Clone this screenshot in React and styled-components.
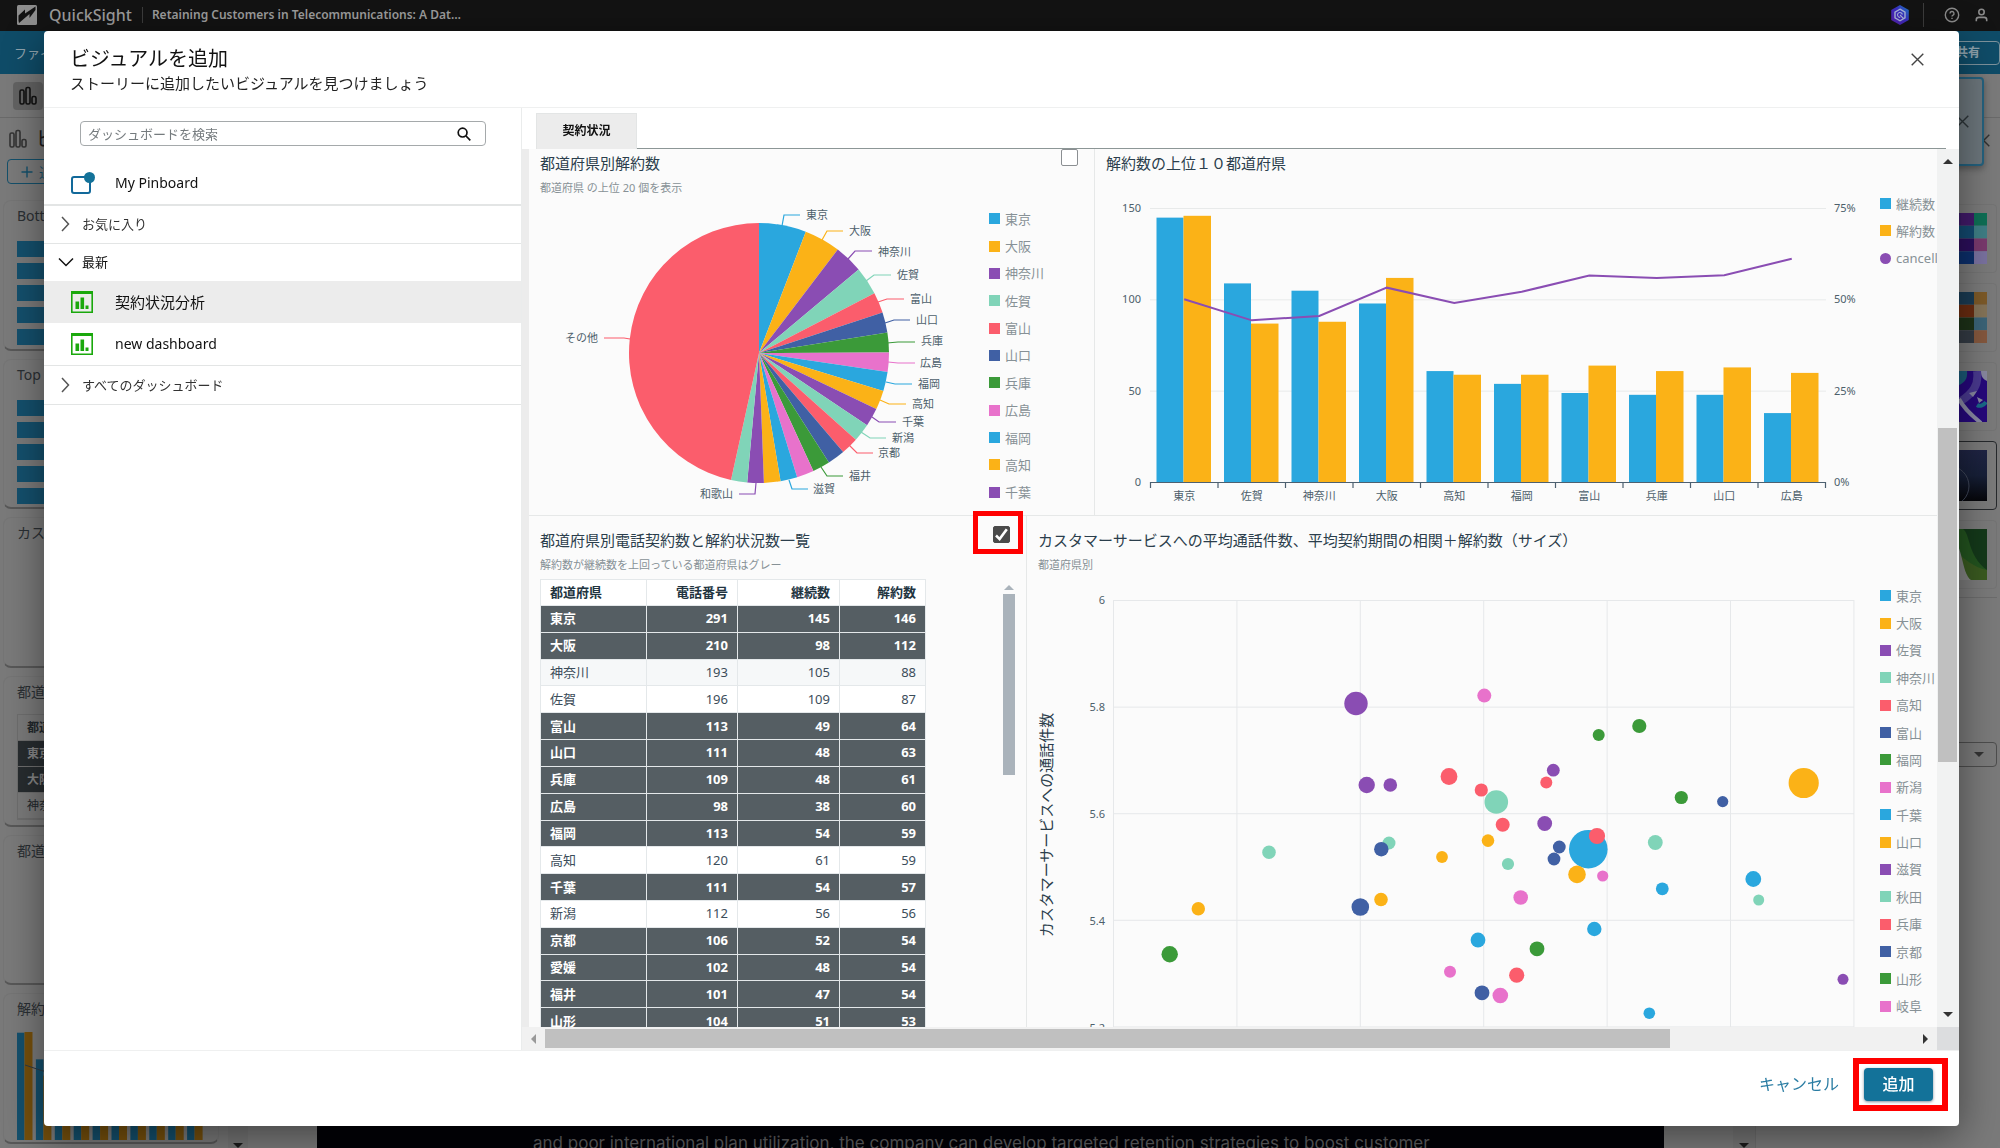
import React from "react";
import styled, { createGlobalStyle, css } from "styled-components";

const C = {
  blue: "#2aa7de",
  orange: "#fbb217",
  purple: "#8a4db3",
  mint: "#80d4b8",
  red: "#fb5d6c",
  navy: "#4060a4",
  green: "#3b9a39",
  pink: "#e872cb",
};
const CYCLE = [C.blue, C.orange, C.purple, C.mint, C.red, C.navy, C.green, C.pink];

const GlobalStyle = createGlobalStyle`
  *, *::before, *::after { box-sizing: border-box; }
  body {
    margin: 0;
    overflow: hidden;
    font-family: "Noto Sans", "Noto Sans CJK JP", sans-serif;
    font-size: 13px;
    color: #16191f;
  }
  button, input { font-family: inherit; }
  h1, h2, p { margin: 0; font-weight: 400; }
  svg { display: block; flex: none; }
`;

/* ---------- application behind the dialog ---------- */

const Page = styled.div`
  display: flex;
  flex-direction: column;
  height: 100vh;
  background: #7a7a7a;
`;

const TopBar = styled.header`
  display: flex;
  align-items: center;
  height: 31px;
  padding: 0 12px 2px 17px;
  background: #131313;
  color: #9c9c9c;
  flex: none;
`;

const Brand = styled.span`
  margin-left: 12px;
  font-size: 16px;
  line-height: 20px;
  font-weight: 500;
`;

const BarDivider = styled.span`
  width: 1px;
  height: ${(p) => (p.$tall ? 24 : 16)}px;
  margin: 0 ${(p) => (p.$tall ? 20 : 9)}px 0 ${(p) => (p.$tall ? 13 : 10)}px;
  background: #3c3c3c;
`;

const StoryName = styled.span`
  font-size: 12px;
  line-height: 18px;
  font-weight: 600;
`;

const TopIcons = styled.div`
  display: flex;
  align-items: center;
  margin-left: auto;
  svg:last-child { margin-left: 15px; }
`;

const MenuBar = styled.div`
  display: flex;
  align-items: center;
  justify-content: space-between;
  height: 43px;
  padding-left: 14px;
  background: #0f4c68;
  color: #8fa3ad;
  flex: none;
`;

const ShareButton = styled.button`
  height: 24px;
  width: 64px;
  padding: 0 0 2px;
  border: 1px solid #7d929c;
  border-radius: 4px;
  background: transparent;
  color: #8fa3ad;
  font-size: 12px;
  font-weight: 700;
`;

const ToolBar = styled.div`
  height: 44px;
  padding: 8px 13px;
  border-bottom: 1px solid #6a6a6a;
  flex: none;
`;

const ToolButton = styled.button`
  display: grid;
  place-items: center;
  width: 30px;
  height: 28px;
  padding: 0;
  border: 0;
  border-radius: 4px;
  background: #636363;
`;

const Workspace = styled.div`
  display: flex;
  flex: 1;
  min-height: 0;
`;

const LeftPane = styled.aside`
  display: flex;
  width: 248px;
  margin-right: 69px;
`;

const LeftMain = styled.div`
  display: flex;
  flex-direction: column;
  flex: 1;
  padding: 7px 9px 4px 3px;
`;

const PaneHeading = styled.div`
  display: flex;
  align-items: center;
  gap: 8px;
  height: 28px;
  padding-left: 5px;
  font-size: 20px;
  line-height: 28px;
  color: #1c1c1c;
`;

const OutlineButton = styled.button`
  display: flex;
  align-items: center;
  gap: 6px;
  align-self: flex-start;
  height: 25px;
  width: 90px;
  margin: 6px 0 16px 4px;
  padding: 0 13px;
  border: 1px solid #14506b;
  border-radius: 4px;
  background: transparent;
  color: #14506b;
  font-size: 13px;
  white-space: nowrap;
`;

const CardList = styled.div`
  display: flex;
  flex-direction: column;
  flex: 1;
  gap: 8px;
`;

const Card = styled.div`
  flex: 1;
  min-height: 0;
  overflow: hidden;
  padding: 4px 13px;
  border-radius: 8px;
  border: 1px solid #757575;
  border-bottom: 2px solid #585858;
  color: #2a2f33;
  & > svg { margin-top: 12px; }
`;

const CardTitle = styled.p`
  font-size: 14px;
  line-height: 22px;
  white-space: nowrap;
`;

const MiniBars = styled.div`
  display: grid;
  gap: 6px;
  padding-top: 14px;
  & > i { height: 16px; background: #14506d; }
`;

const MiniTable = styled.div`
  margin-top: 11px;
  border: 1px solid #6e6e6e;
  font-size: 12px;
`;

const MiniRow = styled.div`
  height: 26px;
  padding-left: 9px;
  line-height: 25px;
  font-weight: ${(p) => (p.$plain ? 400 : 700)};
  background: ${(p) => (p.$dark ? "#272c2f" : "transparent")};
  color: ${(p) => (p.$dark ? "#858585" : "#22282c")};
  border-bottom: 1px solid #6e6e6e;
`;

const GutterTrack = styled.div`
  display: flex;
  align-items: flex-end;
  justify-content: center;
  width: 22px;
  background: #757575;
`;

const Canvas = styled.main`
  display: flex;
  flex: 1;
  align-items: flex-end;
  overflow: hidden;
  padding-left: 216px;
  background: #020207;
  color: #5c5c5e;
  font-family: Inter, sans-serif;
  font-size: 17px;
  line-height: 24px;
  white-space: nowrap;
`;

const CanvasText = styled.p`
  margin-bottom: -7px;
`;

const CanvasGutter = styled.div`
  width: 69px;
`;

const RightPane = styled.aside`
  display: flex;
  flex-direction: column;
  width: 245px;
  padding: 10px 3px 0 12px;
  border-left: 1px solid #6e6e6e;
`;

const RightTop = styled.div`
  display: flex;
  justify-content: flex-end;
  padding: 6px 7px 0 0;
  height: 76px;
`;

const ThemeList = styled.div`
  display: grid;
  gap: 10px;
  padding-bottom: 8px;
  border-bottom: 1px solid #6c6c6c;
`;

const ThemeCard = styled.div`
  display: flex;
  justify-content: flex-end;
  height: 69px;
  padding: 8px 9px;
  border-radius: 4px;
  border: 1px solid ${(p) => (p.$selected ? "#26292c" : "#747474")};
`;

const SelectWrap = styled.label`
  position: relative;
  display: block;
  margin-top: 144px;
  svg { position: absolute; right: 13px; top: 10px; }
`;

const PaneSelect = styled.select`
  appearance: none;
  display: block;
  width: 100%;
  height: 25px;
  border: 1px solid #4d4d4d;
  border-radius: 4px;
  background: transparent;
`;

const Notice = styled.div`
  position: absolute;
  top: 77px;
  right: 16px;
  width: 400px;
  height: 89px;
  display: flex;
  align-items: center;
  justify-content: flex-end;
  padding-right: 13px;
  border: 2px solid #24617e;
  border-radius: 4px;
  background: #6c767c;
  box-shadow: 0 3px 6px rgba(0, 0, 0, 0.3);
`;

/* ---------- dialog ---------- */

const DialogShadow = styled.div`
  position: fixed;
  inset: 31px 41px 22px 44px;
  border-radius: 4px;
  box-shadow: 0 10px 40px rgba(0, 0, 0, 0.45);
`;

const Dialog = styled.section`
  position: fixed;
  inset: 31px 41px 22px 44px;
  display: flex;
  flex-direction: column;
  overflow: hidden;
  border-radius: 4px;
  background: #fff;
`;

const DialogHeader = styled.header`
  display: flex;
  justify-content: space-between;
  align-items: flex-start;
  height: 77px;
  padding: 14px 35px 0 26px;
  border-bottom: 1px solid #eff0f0;
  flex: none;
  h1 { font-size: 20px; line-height: 28px; color: #111; }
  p { font-size: 15px; line-height: 20px; color: #222; }
`;

const IconButton = styled.button`
  display: grid;
  place-items: center;
  width: 28px;
  height: 28px;
  margin-right: -7px;
  padding: 0;
  border: 0;
  background: transparent;
`;

const DialogBody = styled.div`
  display: flex;
  flex: 1;
  min-height: 0;
`;

const Sidebar = styled.nav`
  width: 478px;
  flex: none;
  border-right: 1px solid #eaecec;
`;

const SearchBox = styled.label`
  display: flex;
  align-items: center;
  height: 25px;
  margin: 13px 35px 16px 36px;
  padding: 0 14px 0 7px;
  border: 1px solid #a5a9ab;
  border-radius: 4px;
`;

const SearchInput = styled.input`
  flex: 1;
  height: 20px;
  padding: 0;
  border: 0;
  outline: 0;
  background: transparent;
  font-size: 13px;
  &::placeholder { color: #757b7e; opacity: 1; }
`;

const NavItem = styled.a`
  display: flex;
  align-items: center;
  gap: 20px;
  height: 42px;
  padding-left: 27px;
  font-size: 14px;
  line-height: 22px;
  color: #111;
  text-decoration: none;
  background: ${(p) => (p.$selected ? "#ececec" : "transparent")};
  svg { width: 24px; }
  ${(p) => p.lang === "ja" && css`font-size: 15px;`}
`;

const NavGroup = styled.button`
  display: flex;
  align-items: center;
  gap: 8px;
  width: 100%;
  height: ${(p) => (p.$open ? 38 : 39)}px;
  padding: 0 0 1px 14px;
  border: 0;
  border-top: ${(p) => (p.$first ? 2 : 1)}px solid #e3e5e5;
  background: transparent;
  color: ${(p) => (p.$open ? "#111" : "#333")};
  font-size: 13px;
  line-height: 20px;
`;

const NavEnd = styled.div`
  height: 1px;
  background: #e3e5e5;
`;

const Content = styled.div`
  display: flex;
  flex-direction: column;
  flex: 1;
  min-width: 0;
`;

const TabBar = styled.div`
  display: flex;
  height: 41px;
  padding: 5px 13px 0 14px;
  flex: none;
  &::after { content: ""; flex: 1; border-bottom: 1px solid #8c9696; }
`;

const Tab = styled.button`
  width: 101px;
  padding: 0 0 3px;
  border: 1px solid #e3e5e5;
  border-bottom: 0;
  background: #ececec;
  color: #111;
  font-size: 12px;
  font-weight: 700;
`;

const ScrollGrid = styled.div`
  display: grid;
  grid-template-columns: 1fr 22px;
  grid-template-rows: 1fr 23px;
  flex: 1;
  min-height: 0;
`;

const Viewport = styled.div`
  overflow: hidden;
  padding-left: 7px;
  background: #ececec;
`;

const Sheet = styled.div`
  display: flex;
  flex-direction: column;
  margin-top: -10px;
  background: #fbfbfb;
`;

const SheetRow = styled.div`
  display: flex;
  height: ${(p) => p.$height}px;
  border-bottom: 1px solid #e6e8e8;
`;

const Panel = styled.article`
  flex: ${(p) => (p.$width ? "none" : 1)};
  width: ${(p) => (p.$width ? p.$width + "px" : "auto")};
  min-width: 0;
  padding: 0 0 0 11px;
  border-right: ${(p) => (p.$width ? 1 : 0)}px solid #e6e8e8;
`;

const PanelHead = styled.div`
  display: flex;
  justify-content: space-between;
  align-items: flex-start;
  padding: 10px 16px 0 0;
  h2 { padding: 3px 0 1px; font-size: 15px; line-height: 22px; color: #2b3e4c; white-space: nowrap; }
  p { padding-top: 4px; font-size: 11px; line-height: 18px; color: #879196; white-space: nowrap; }
`;

const PanelBody = styled.div`
  display: flex;
`;

const TickLabel = styled.label`
  position: relative;
  display: block;
  width: 17px;
  height: 17px;
  input {
    appearance: none;
    display: block;
    width: 17px;
    height: 17px;
    margin: 0;
    border: 1px solid #8b8f92;
    border-radius: 2px;
    background: #fff;
  }
  input:checked { background: #4a4a4a; border-color: #4a4a4a; }
  svg { position: absolute; inset: 0; }
`;

const MarkTick = styled.span`
  position: absolute;
  left: -20px;
  top: -15px;
  width: 50px;
  height: 43px;
  border: 5px solid #f00;
`;

const LegendList = styled.ul`
  display: grid;
  grid-auto-rows: 1fr;
  height: ${(p) => p.$height}px;
  margin: ${(p) => p.$top}px 0 0;
  padding: 0;
  list-style: none;
`;

const LegendItem = styled.li`
  display: flex;
  align-items: center;
  gap: 5px;
  min-height: 0;
  font-size: 13px;
  line-height: 20px;
  color: #879196;
  white-space: nowrap;
  &::before {
    content: "";
    width: 11px;
    height: 11px;
    background: ${(p) => p.$color};
    border-radius: ${(p) => (p.$round ? "50%" : 0)};
  }
`;

const PieBody = styled(PanelBody)`
  gap: 9px;
`;

const TableBody = styled(PanelBody)`
  justify-content: space-between;
  padding: 5px 11px 0 0;
`;

const DataTable = styled.table`
  width: 386px;
  height: 456px;
  table-layout: fixed;
  border-collapse: collapse;
  font-size: 13px;
  line-height: 18px;
  color: #3c4d5a;
  th, td {
    height: 26px;
    padding: 0 9px 1px;
    border: 1px solid #e4e8ea;
    text-align: right;
  }
  th:first-child, td:first-child { text-align: left; }
  th { color: #22343f; background: #fff; }
`;

const DataRow = styled.tr`
  background: ${(p) => (p.$dark ? "#555e63" : p.$tint ? "#f6f8f9" : "#fff")};
  ${(p) => p.$dark && css`color: #fff; font-weight: 700;`}
`;

const InnerScroll = styled.div`
  width: 12px;
  padding-top: 6px;
  svg { margin: 0 auto 4px; }
`;

const InnerThumb = styled.div`
  height: 181px;
  background: #aab3bb;
`;

const VTrack = styled.div`
  display: flex;
  flex-direction: column;
  padding: 0 2px 0 1px;
  background: #f1f2f2;
`;

const HTrack = styled.div`
  display: flex;
  padding: 2px 0;
  background: #f1f1f1;
`;

const ArrowCell = styled.span`
  display: grid;
  place-items: center;
  min-width: ${(p) => (p.$tall ? 0 : 23)}px;
  min-height: ${(p) => (p.$tall ? 25 : 19)}px;
`;

const Space = styled.span`
  flex: ${(p) => p.$grow};
`;

const Thumb = styled.span`
  flex: ${(p) => p.$grow};
  background: #c0c0c0;
`;

const Corner = styled.div`
  background: #dcdddf;
`;

const DialogFooter = styled.footer`
  display: flex;
  justify-content: flex-end;
  align-items: flex-start;
  gap: 14px;
  height: 76px;
  padding: 7px 11px 0;
  border-top: 1px solid #eff0f0;
  flex: none;
`;

const LinkButton = styled.button`
  height: 49px;
  padding: 0;
  border: 0;
  background: transparent;
  color: #2b7da3;
  font-size: 16px;
`;

const MarkFrame = styled.div`
  padding: 4px 9px 4px 5px;
  border: 6px solid #f00;
`;

const PrimaryButton = styled.button`
  display: block;
  width: 69px;
  height: 33px;
  padding: 0 0 4px;
  border: 0;
  border-radius: 4px;
  background: #137299;
  box-shadow: 0 1px 3px rgba(0, 30, 60, 0.5);
  color: #fff;
  font-size: 16px;
  font-weight: 500;
`;

const ChartSvg = styled.svg`
  text {
    font-size: 11px;
    fill: #4d5f6b;
    dominant-baseline: central;
  }
  text.axis-title { font-size: 15px; fill: #2b3e4c; }
`;

/* ---------- icons ---------- */

const BarsIcon = ({ color = "#111" }) => (
  <svg width="20" height="20" viewBox="0 0 20 20" fill="none" stroke={color} strokeWidth="1.6">
    <rect x="2" y="4" width="4" height="14" rx="1.6" />
    <rect x="8" y="1.5" width="4" height="16.5" rx="1.6" />
    <rect x="14" y="10.5" width="4" height="7.5" rx="1.6" />
  </svg>
);

const PlusIcon = () => (
  <svg width="12" height="12" viewBox="0 0 12 12" stroke="#14506b" strokeWidth="1.4">
    <path d="M6 .5v11M.5 6h11" />
  </svg>
);

const Cross = ({ size = 13, color = "#444" }) => (
  <svg width={size} height={size} viewBox="0 0 13 13" stroke={color} strokeWidth="1.4">
    <path d="M.7.7l11.6 11.6M12.3.7L.7 12.3" />
  </svg>
);

const ARROWS = { up: "M0 5L5 0L10 5z", down: "M0 0L5 5L10 0z", left: "M5 0L0 5L5 10z", right: "M0 0L5 5L0 10z" };
const Arrow = ({ dir, color = "#333" }) => {
  const flat = dir === "up" || dir === "down";
  return (
    <svg width={flat ? 10 : 5} height={flat ? 5 : 10}>
      <path d={ARROWS[dir]} fill={color} />
    </svg>
  );
};

const Logo = () => (
  <svg width="20" height="20" viewBox="0 0 20 20">
    <rect width="20" height="20" rx="1.5" fill="#8e8e8e" />
    <path d="M1.500 15.500V10.500L8 4.500V8.500L18.500 1.500V5L12.500 13V9L2 18z" fill="#131313" />
  </svg>
);

const HexIcon = () => (
  <svg width="20" height="20" viewBox="0 0 20 20">
    <defs>
      <linearGradient id="hex" x1="0" y1="1" x2="1" y2="0">
        <stop offset="0" stopColor="#5a1fa8" />
        <stop offset=".55" stopColor="#3a2cc0" />
        <stop offset="1" stopColor="#1a7fc0" />
      </linearGradient>
    </defs>
    <path d="M10 0l8.800 5v10L10 20l-8.800-5V5z" fill="url(#hex)" />
    <path d="M10 4.200l5 2.900v5.800l-5 2.900-5-2.900V7.100z" fill="none" stroke="#a9b4d8" strokeWidth="1.400" />
    <path d="M13.500 13.500L10 10M12.300 9.600a2.400 2.400 0 1 0-2 2.700" fill="none" stroke="#a9b4d8" strokeWidth="1.100" />
  </svg>
);

const HelpIcon = () => (
  <svg width="16" height="16" viewBox="0 0 16 16" fill="none" stroke="#8a8a8a" strokeWidth="1.400">
    <circle cx="8" cy="8" r="6.700" />
    <path d="M6 6.500a2 2 0 1 1 2.800 1.800c-.6.300-.8.600-.8 1.200M8 10.800v1.300" />
  </svg>
);

const UserIcon = () => (
  <svg width="13" height="14" viewBox="0 0 13 14" fill="none" stroke="#8a8a8a" strokeWidth="1.600">
    <circle cx="6.500" cy="4" r="2.700" />
    <path d="M1.300 13.200v-1.500c0-1.500 1-2.300 2.500-2.300h5.400c1.500 0 2.500.8 2.500 2.300v1.500" />
  </svg>
);

const SearchIcon = () => (
  <svg width="14" height="14" viewBox="0 0 14 14" fill="none" stroke="#111" strokeWidth="1.700">
    <circle cx="5.600" cy="5.600" r="4.400" />
    <path d="M9 9l4.300 4.300" />
  </svg>
);

const PinboardIcon = () => (
  <svg width="24" height="22" viewBox="0 0 24 22">
    <rect x="1" y="5" width="18" height="16" rx="2" fill="none" stroke="#12699a" strokeWidth="2" />
    <circle cx="18.500" cy="5.500" r="5.500" fill="#137299" />
  </svg>
);

const DashboardIcon = () => (
  <svg width="24" height="22" viewBox="0 0 24 22" fill="#1aa80c">
    <path d="M0 0h22v22H0zM1.600 3v17.400h18.800V3z" fillRule="evenodd" />
    <rect x="4.500" y="10.500" width="3.600" height="7.500" />
    <rect x="9.500" y="6.500" width="3.600" height="11.500" />
    <rect x="14.500" y="14.500" width="3" height="3.500" />
  </svg>
);

const Chevron = ({ open }) => (
  <svg width="16" height="16" viewBox="0 0 16 16" fill="none" stroke={open ? "#111" : "#555"} strokeWidth="1.500">
    <path d={open ? "M1 4.500l7 7 7-7" : "M4 1l6.500 7L4 15"} />
  </svg>
);

/* ---------- data ---------- */

const PIE_CENTER = [759, 353];
const PIE_R = 130;
const PIE_VALUES = [146, 112, 88, 87, 64, 63, 61, 60, 59, 59, 57, 56, 54, 54, 54, 53, 52, 51, 51, 50, 1159];
const PIE_LABELS = [
  ["東京", 0, 806, 214, "782,226 784,215 800,215"],
  ["大阪", 1, 849, 230, "822,240 827,231 843,231"],
  ["神奈川", 2, 878, 251, "848,259 855,251 872,251"],
  ["佐賀", 3, 897, 274, "866,281 874,275 891,275"],
  ["富山", 4, 910, 298, "878,302 887,299 904,299"],
  ["山口", 5, 916, 319, "885,323 894,320 910,320"],
  ["兵庫", 6, 921, 340, "887,343 898,342 915,342"],
  ["広島", 7, 920, 362, "888,362 898,363 915,363"],
  ["福岡", 8, 918, 383, "886,382 895,384 912,384"],
  ["高知", 9, 912, 403, "880,400 889,404 906,404"],
  ["千葉", 10, 902, 421, "872,417 879,422 896,422"],
  ["新潟", 11, 892, 437, "861,432 870,438 886,438"],
  ["京都", 12, 878, 452, "849,445 857,453 873,453"],
  ["福井", 14, 849, 475, "821,467 827,476 843,476"],
  ["滋賀", 16, 813, 488, "789,480 792,489 808,489"],
  ["和歌山", 18, 733, 493, "756,483 755,494 739,494", "end"],
  ["その他", 20, 598, 337, "630,339 624,338 604,338", "end"],
];
const PIE_LEGEND = ["東京", "大阪", "神奈川", "佐賀", "富山", "山口", "兵庫", "広島", "福岡", "高知", "千葉"];

const COMBO = [
  ["東京", 145, 146], ["佐賀", 109, 87], ["神奈川", 105, 88], ["大阪", 98, 112], ["高知", 61, 59],
  ["福岡", 54, 59], ["富山", 49, 64], ["兵庫", 48, 61], ["山口", 48, 63], ["広島", 38, 60],
];

const ROWS = [
  ["東京", 291, 145, 146], ["大阪", 210, 98, 112], ["神奈川", 193, 105, 88], ["佐賀", 196, 109, 87],
  ["富山", 113, 49, 64], ["山口", 111, 48, 63], ["兵庫", 109, 48, 61], ["広島", 98, 38, 60],
  ["福岡", 113, 54, 59], ["高知", 120, 61, 59], ["千葉", 111, 54, 57], ["新潟", 112, 56, 56],
  ["京都", 106, 52, 54], ["愛媛", 102, 48, 54], ["福井", 101, 47, 54], ["山形", 104, 51, 53],
];

const BUBBLES = [
  ["purple", 1356, 703.5, 11.7], ["pink", 1484.3, 695.6, 7], ["purple", 1366.7, 785, 8.2], ["purple", 1390.3, 785, 6.8],
  ["red", 1449, 776.5, 8.4], ["red", 1481.3, 790, 6.6], ["mint", 1496.3, 802, 11.8], ["red", 1502.7, 824.7, 7],
  ["orange", 1488, 840.6, 6.3], ["mint", 1269, 852.3, 6.8], ["mint", 1389, 843, 6.5], ["navy", 1381.3, 849.2, 7.2],
  ["orange", 1442, 857, 5.9], ["mint", 1508, 864, 6.1], ["orange", 1198.3, 908.7, 6.7], ["navy", 1360.3, 907, 8.8],
  ["orange", 1381, 899.5, 6.8], ["green", 1169.7, 954.2, 8.2], ["blue", 1478, 940, 7.4], ["pink", 1450, 971.8, 6],
  ["navy", 1482, 992.8, 7.4], ["pink", 1500.3, 995.5, 7.8], ["green", 1598.7, 735.1, 6], ["green", 1639.3, 726, 7.1],
  ["purple", 1553.3, 770.2, 6.4], ["red", 1546.3, 782.6, 6], ["orange", 1803.7, 783, 15.1], ["green", 1681.3, 797.5, 6.6],
  ["navy", 1722.7, 801.6, 5.6], ["purple", 1544.7, 823.5, 7.4], ["navy", 1559.3, 847, 6.4], ["navy", 1554, 859, 6.4],
  ["blue", 1588.3, 849.2, 19.3], ["red", 1597, 836, 8.1], ["orange", 1577, 874.4, 8.8], ["pink", 1602.7, 876, 5.6],
  ["mint", 1655.3, 842.5, 7.4], ["blue", 1662.3, 888.8, 6.4], ["blue", 1753.3, 879, 7.9], ["mint", 1758.7, 900, 5.5],
  ["pink", 1520.7, 897.5, 7.3], ["blue", 1594.3, 929, 7.2], ["green", 1537, 948.8, 7.4], ["red", 1516.7, 975.2, 7.6],
  ["purple", 1843, 979.3, 5.5], ["blue", 1649.3, 1013.2, 5.8],
];
const SCATTER_LEGEND = ["東京", "大阪", "佐賀", "神奈川", "高知", "富山", "福岡", "新潟", "千葉", "山口", "滋賀", "秋田", "兵庫", "京都", "山形", "岐阜"];

/* ---------- charts ---------- */

function PieChart() {
  const total = PIE_VALUES.reduce((a, b) => a + b, 0);
  const [cx, cy] = PIE_CENTER;
  const at = (v) => {
    const a = (v / total) * Math.PI * 2;
    return `${(cx + PIE_R * Math.sin(a)).toFixed(2)} ${(cy - PIE_R * Math.cos(a)).toFixed(2)}`;
  };
  let sum = 0;
  return (
    <ChartSvg width="440" height="316" viewBox="540 197 440 316" role="img" aria-label="都道府県別解約数">
      {PIE_VALUES.map((v, i) => {
        const from = sum;
        sum += v;
        const large = v / total > 0.5 ? 1 : 0;
        return <path key={i} d={`M${cx} ${cy}L${at(from)}A${PIE_R} ${PIE_R} 0 ${large} 1 ${at(sum)}z`} fill={CYCLE[i % 8]} />;
      })}
      {PIE_LABELS.map(([name, i, x, y, line, anchor]) => (
        <g key={name}>
          <polyline points={line} fill="none" stroke={CYCLE[i % 8]} strokeWidth="1.200" />
          <text x={x} y={y} textAnchor={anchor || "start"}>{name}</text>
        </g>
      ))}
    </ChartSvg>
  );
}

function ComboChart() {
  const y = (v) => 482.5 - (v / 150) * 274;
  const x0 = 1150.5;
  const step = 67.5;
  const line = COMBO.map(([, a, b], i) => `${x0 + step * (i + 0.5)},${y((b / (a + b)) * 200)}`).join(" ");
  return (
    <ChartSvg width="774" height="338" viewBox="1106 175 774 338" role="img" aria-label="解約数の上位１０都道府県">
      {[150, 100, 50, 0].map((v) => (
        <g key={v}>
          <path d={`M1150 ${y(v)}H1826`} stroke="#e8eaea" />
          <text x="1141" y={y(v) - 1} textAnchor="end">{v}</text>
          <text x="1834" y={y(v) - 1}>{v / 2}%</text>
        </g>
      ))}
      {COMBO.map(([name, a, b], i) => {
        const x = x0 + step * i;
        return (
          <g key={name}>
            <rect x={x + 6} y={y(a)} width="27" height={482.5 - y(a)} fill={C.blue} />
            <rect x={x + 33} y={y(b)} width="27.500" height={482.5 - y(b)} fill={C.orange} />
            <text x={x + step / 2} y="495" textAnchor="middle">{name}</text>
          </g>
        );
      })}
      <polyline points={line} fill="none" stroke={C.purple} strokeWidth="2" />
      <path
        d={`M1150 482.500H1826${COMBO.concat([0]).map((_, i) => `M${x0 + step * i} 482V488`).join("")}`}
        stroke="#4d6070"
        strokeWidth="1.200"
        fill="none"
      />
    </ChartSvg>
  );
}

function ScatterChart() {
  return (
    <ChartSvg width="842" height="453" viewBox="1038 574 842 453" role="img" aria-label="相関">
      {[6, 5.8, 5.6, 5.4, 5.2].map((v, i) => (
        <g key={v}>
          <path d={`M1113 ${600.5 + 106.6 * i}H1854`} stroke="#e6e8ea" />
          <text x="1105" y={599 + 107 * i} textAnchor="end">{v}</text>
        </g>
      ))}
      {[0, 1, 2, 3, 4, 5, 6].map((i) => (
        <path key={i} d={`M${1113.5 + 123.4 * i} 600V1027`} stroke="#e6e8ea" />
      ))}
      {BUBBLES.map(([color, x, y, r], i) => (
        <circle key={i} cx={x} cy={y} r={r} fill={C[color]} />
      ))}
      <text className="axis-title" transform="translate(1046 825) rotate(-90)" textAnchor="middle">
        カスタマーサービスへの通話件数
      </text>
    </ChartSvg>
  );
}

function Legend({ items, top, height }) {
  return (
    <LegendList $top={top} $height={height}>
      {items.map(([name, color, round]) => (
        <LegendItem key={name} $color={color} $round={round}>{name}</LegendItem>
      ))}
    </LegendList>
  );
}

const cycleLegend = (names) => names.map((n, i) => [n, CYCLE[i % 8]]);

function Tick({ label, checked, marked }) {
  return (
    <TickLabel>
      <input type="checkbox" aria-label={label} defaultChecked={checked} />
      {checked && (
        <svg width="17" height="17" viewBox="0 0 17 17" fill="none" stroke="#fff" strokeWidth="2.600">
          <path d="M3 9.500l3.600 3.600L13.800 3.200" />
        </svg>
      )}
      {marked && <MarkTick />}
    </TickLabel>
  );
}

function VisualsTable() {
  return (
    <DataTable>
      <colgroup>
        <col width="106" />
        <col width="91" />
        <col width="102" />
        <col width="86" />
      </colgroup>
      <thead>
        <tr>{["都道府県", "電話番号", "継続数", "解約数"].map((h) => <th key={h} scope="col">{h}</th>)}</tr>
      </thead>
      <tbody>
        {ROWS.map((r) => (
          <DataRow key={r[0]} $dark={r[3] > r[2]} $tint={r[0] === "神奈川"}>
            {r.map((v, i) => <td key={i}>{v}</td>)}
          </DataRow>
        ))}
      </tbody>
    </DataTable>
  );
}

/* ---------- background pieces ---------- */

const Swatches = ({ colors }) => (
  <svg width="52" height="51" viewBox="0 0 52 51">
    {colors.map((row, y) =>
      row.map((c, x) => <rect key={`${x}${y}`} x={x * 13} y={y * 12.75} width="13" height="12.75" fill={c} />)
    )}
  </svg>
);

const VIVID = [
  ["#1b5f7d", "#3a1a66", "#421a6a", "#0e6f55"],
  ["#1b5f7d", "#134a70", "#134a70", "#3f7f86"],
  ["#421a6a", "#2c0f5c", "#2c0f5c", "#7a3a6e"],
  ["#0c2f6c", "#0c2f6c", "#0c2f6c", "#7a72a0"],
];
const EARTH = [
  ["#1a3c54", "#1a3c54", "#1a3c54", "#7d5a28"],
  ["#6a2c10", "#6a2c10", "#6a2c10", "#857458"],
  ["#1d3218", "#1d3218", "#1d3218", "#3b6478"],
  ["#343b44", "#343b44", "#343b44", "#85583e"],
];

const WaveThumb = () => (
  <svg width="52" height="51" viewBox="0 0 52 51">
    <rect width="52" height="51" fill="#26087c" />
    <path d="M20 0h12c1 8-3 12-8 14z" fill="#1a5a78" />
    <path d="M26 30C38 22 44 14 42 0" stroke="#4a3a90" strokeWidth="8" fill="none" />
    <path d="M46 0c0 6 2 8 6 10V0zM34 22l8-2-4 6zM42 26l6 3-4 3z" fill="#8888a0" />
    <path d="M24 28c4 8 12 16 22 24" stroke="#8a8aa4" strokeWidth="4" fill="none" />
    <path d="M42 34c3 2 7 0 9-3" stroke="#1a6a88" strokeWidth="4" fill="none" />
  </svg>
);

const NightThumb = () => (
  <svg width="52" height="51" viewBox="0 0 52 51">
    <defs>
      <linearGradient id="night" x1="0" y1="0" x2="0" y2="1">
        <stop offset="0" stopColor="#1f2444" />
        <stop offset=".5" stopColor="#172038" />
        <stop offset="1" stopColor="#06060a" />
      </linearGradient>
    </defs>
    <rect width="52" height="51" fill="url(#night)" />
    <circle cx="14" cy="36" r="20" fill="none" stroke="#3f4658" />
  </svg>
);

const LeafThumb = () => (
  <svg width="52" height="51" viewBox="0 0 52 51">
    <rect width="52" height="51" fill="#14391a" />
    <path d="M0 0h28c8 6 4 26 24 41v10H0z" fill="#23541f" />
    <path d="M20 22c10 8 18 16 32 19v10H20z" fill="#3a5a20" />
    <path d="M0 10h16c12 2 10 34 20 41H0z" fill="#848484" />
  </svg>
);

const MiniCombo = () => (
  <svg width="188" height="108" viewBox="0 0 188 108">
    {COMBO.map(([n, a, b], i) => (
      <g key={n}>
        <rect x={i * 18.9} y={108 - a * 0.74} width="7.500" height={a * 0.74} fill="#14506d" />
        <rect x={i * 18.9 + 7.5} y={108 - b * 0.74} width="8" height={b * 0.74} fill="#76500c" />
      </g>
    ))}
    <path d="M8 33L26 39L46 38" stroke="#2f3a44" fill="none" />
  </svg>
);

export default function App() {
  return (
    <>
      <GlobalStyle />
      <Page lang="ja">
        <TopBar>
          <Logo />
          <Brand>QuickSight</Brand>
          <BarDivider />
          <StoryName>Retaining Customers in Telecommunications: A Dat…</StoryName>
          <TopIcons>
            <HexIcon />
            <BarDivider $tall />
            <HelpIcon />
            <UserIcon />
          </TopIcons>
        </TopBar>
        <MenuBar>
          <span>ファイル</span>
          <ShareButton>共有</ShareButton>
        </MenuBar>
        <ToolBar>
          <ToolButton aria-label="ビジュアル"><BarsIcon /></ToolButton>
        </ToolBar>
        <Workspace>
          <LeftPane>
            <LeftMain>
              <PaneHeading><BarsIcon color="#333" />ビジュアル</PaneHeading>
              <OutlineButton><PlusIcon />追加</OutlineButton>
              <CardList>
                <Card>
                  <CardTitle>Bottom 5</CardTitle>
                  <MiniBars><i /><i /><i /><i /><i /></MiniBars>
                </Card>
                <Card>
                  <CardTitle>Top 5</CardTitle>
                  <MiniBars><i /><i /><i /><i /><i /></MiniBars>
                </Card>
                <Card><CardTitle>カスタマーサービス</CardTitle></Card>
                <Card>
                  <CardTitle>都道府県別電話</CardTitle>
                  <MiniTable>
                    <MiniRow>都道府県</MiniRow>
                    <MiniRow $dark>東京</MiniRow>
                    <MiniRow $dark>大阪</MiniRow>
                    <MiniRow $plain>神奈川</MiniRow>
                  </MiniTable>
                </Card>
                <Card><CardTitle>都道府県別</CardTitle></Card>
                <Card>
                  <CardTitle>解約数の上位</CardTitle>
                  <MiniCombo />
                </Card>
              </CardList>
            </LeftMain>
            <GutterTrack><Arrow dir="down" color="#1c1c1c" /></GutterTrack>
          </LeftPane>
          <Canvas>
            <CanvasText>
              and poor international plan utilization, the company can develop targeted retention strategies to boost customer
            </CanvasText>
          </Canvas>
          <CanvasGutter />
          <GutterTrack><Arrow dir="down" color="#1c1c1c" /></GutterTrack>
          <RightPane>
            <RightTop><Cross color="#333" /></RightTop>
            <ThemeList>
              <ThemeCard><Swatches colors={VIVID} /></ThemeCard>
              <ThemeCard><Swatches colors={EARTH} /></ThemeCard>
              <ThemeCard><WaveThumb /></ThemeCard>
              <ThemeCard $selected><NightThumb /></ThemeCard>
              <ThemeCard><LeafThumb /></ThemeCard>
            </ThemeList>
            <SelectWrap>
              <PaneSelect aria-label="テーマ" />
              <Arrow dir="down" color="#333" />
            </SelectWrap>
          </RightPane>
        </Workspace>
      </Page>
      <Notice><Cross color="#2c3438" /></Notice>

      <DialogShadow />
      <Dialog role="dialog" lang="ja" aria-labelledby="dialog-title">
        <DialogHeader>
          <div>
            <h1 id="dialog-title">ビジュアルを追加</h1>
            <p>ストーリーに追加したいビジュアルを見つけましょう</p>
          </div>
          <IconButton aria-label="閉じる"><Cross /></IconButton>
        </DialogHeader>
        <DialogBody>
          <Sidebar>
            <SearchBox>
              <SearchInput type="text" aria-label="ダッシュボードを検索" placeholder="ダッシュボードを検索" />
              <SearchIcon />
            </SearchBox>
            <NavItem href="#pinboard" lang="en"><PinboardIcon />My Pinboard</NavItem>
            <NavGroup $first><Chevron />お気に入り</NavGroup>
            <NavGroup $open><Chevron open />最新</NavGroup>
            <NavItem href="#contract" lang="ja" $selected><DashboardIcon />契約状況分析</NavItem>
            <NavItem href="#new" lang="en"><DashboardIcon />new dashboard</NavItem>
            <NavGroup><Chevron />すべてのダッシュボード</NavGroup>
            <NavEnd />
          </Sidebar>
          <Content>
            <TabBar><Tab>契約状況</Tab></TabBar>
            <ScrollGrid>
              <Viewport>
                <Sheet>
                  <SheetRow $height={377}>
                    <Panel $width={566}>
                      <PanelHead>
                        <div>
                          <h2>都道府県別解約数</h2>
                          <p>都道府県 の上位 20 個を表示</p>
                        </div>
                        <Tick label="都道府県別解約数" />
                      </PanelHead>
                      <PieBody>
                        <PieChart />
                        <Legend items={cycleLegend(PIE_LEGEND)} top={8} height={301} />
                      </PieBody>
                    </Panel>
                    <Panel>
                      <PanelHead><h2>解約数の上位１０都道府県</h2></PanelHead>
                      <PanelBody>
                        <ComboChart />
                        <Legend
                          items={[["継続数", C.blue], ["解約数", C.orange], ["cancell", C.purple, true]]}
                          top={15}
                          height={82}
                        />
                      </PanelBody>
                    </Panel>
                  </SheetRow>
                  <SheetRow $height={540}>
                    <Panel $width={498}>
                      <PanelHead>
                        <div>
                          <h2>都道府県別電話契約数と解約状況数一覧</h2>
                          <p>解約数が継続数を上回っている都道府県はグレー</p>
                        </div>
                        <Tick label="都道府県別電話契約数と解約状況数一覧" checked marked />
                      </PanelHead>
                      <TableBody>
                        <VisualsTable />
                        <InnerScroll>
                          <Arrow dir="up" color="#aab3bb" />
                          <InnerThumb />
                        </InnerScroll>
                      </TableBody>
                    </Panel>
                    <Panel>
                      <PanelHead>
                        <div>
                          <h2>カスタマーサービスへの平均通話件数、平均契約期間の相関＋解約数（サイズ）</h2>
                          <p>都道府県別</p>
                        </div>
                      </PanelHead>
                      <PanelBody>
                        <ScatterChart />
                        <Legend items={cycleLegend(SCATTER_LEGEND)} top={8} height={438} />
                      </PanelBody>
                    </Panel>
                  </SheetRow>
                </Sheet>
              </Viewport>
              <VTrack>
                <ArrowCell $tall><Arrow dir="up" /></ArrowCell>
                <Space $grow={253} />
                <Thumb $grow={334} />
                <Space $grow={239} />
                <ArrowCell $tall><Arrow dir="down" /></ArrowCell>
              </VTrack>
              <HTrack>
                <ArrowCell><Arrow dir="left" color="#999" /></ArrowCell>
                <Thumb $grow={1126} />
                <Space $grow={244} />
                <ArrowCell><Arrow dir="right" /></ArrowCell>
              </HTrack>
              <Corner />
            </ScrollGrid>
          </Content>
        </DialogBody>
        <DialogFooter>
          <LinkButton>キャンセル</LinkButton>
          <MarkFrame><PrimaryButton>追加</PrimaryButton></MarkFrame>
        </DialogFooter>
      </Dialog>
    </>
  );
}
